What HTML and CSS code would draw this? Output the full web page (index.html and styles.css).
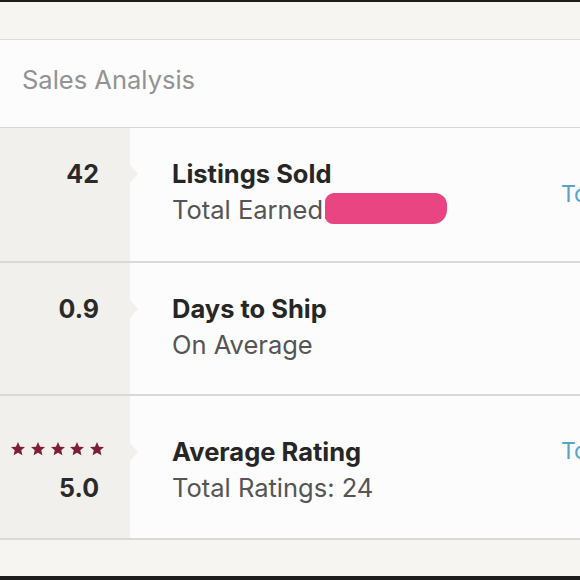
FILE: index.html
```html
<!DOCTYPE html>
<html>
<head>
<meta charset="utf-8">
<link rel="stylesheet" href="styles.css">
</head>
<body>
<div class="frame">
  <div class="topbar"></div>
  <div class="spacer"></div>
  <section class="panel">
    <header class="panel-head">Sales Analysis</header>
    <div class="row">
      <div class="stat"><span class="num">42</span></div>
      <div class="info">
        <div class="text">
          <div class="title">Listings Sold</div>
          <div class="sub">Total Earned:<span class="redact"></span></div>
        </div>
        <a class="link">To</a>
      </div>
    </div>
    <div class="row row-ship">
      <div class="stat"><span class="num">0.9</span></div>
      <div class="info">
        <div class="text">
          <div class="title">Days to Ship</div>
          <div class="sub">On Average</div>
        </div>
      </div>
    </div>
    <div class="row row-rating">
      <div class="stat">
        <span class="stars">
          <svg viewBox="0 0 24 24"><path d="M12 1.5l3.1 7 7.4.6-5.6 4.9 1.7 7.4L12 17.5l-6.6 3.9 1.7-7.4L1.5 9.1l7.4-.6z"/></svg>
          <svg viewBox="0 0 24 24"><path d="M12 1.5l3.1 7 7.4.6-5.6 4.9 1.7 7.4L12 17.5l-6.6 3.9 1.7-7.4L1.5 9.1l7.4-.6z"/></svg>
          <svg viewBox="0 0 24 24"><path d="M12 1.5l3.1 7 7.4.6-5.6 4.9 1.7 7.4L12 17.5l-6.6 3.9 1.7-7.4L1.5 9.1l7.4-.6z"/></svg>
          <svg viewBox="0 0 24 24"><path d="M12 1.5l3.1 7 7.4.6-5.6 4.9 1.7 7.4L12 17.5l-6.6 3.9 1.7-7.4L1.5 9.1l7.4-.6z"/></svg>
          <svg viewBox="0 0 24 24"><path d="M12 1.5l3.1 7 7.4.6-5.6 4.9 1.7 7.4L12 17.5l-6.6 3.9 1.7-7.4L1.5 9.1l7.4-.6z"/></svg>
        </span>
        <span class="num">5.0</span>
      </div>
      <div class="info">
        <div class="text">
          <div class="title">Average Rating</div>
          <div class="sub">Total Ratings: 24</div>
        </div>
        <a class="link link-top">To</a>
      </div>
    </div>
  </section>
  <div class="bottom"></div>
</div>
</body>
</html>
```
FILE: styles.css
```css
html, body {
  margin: 0;
  padding: 0;
  overflow: hidden;
}
body {
  background: #f6f5f2;
  font-family: "Inter", "Open Sans", sans-serif;
  width: 580px;
  height: 580px;
}
.frame {
  display: flex;
  flex-direction: column;
  height: 580px;
}
.topbar {
  height: 2px;
  background: #1d1d1d;
}
.spacer {
  height: 37px;
  background: #f6f5f2;
  border-bottom: 1px solid #dedad6;
}
.panel {
  background: #fcfcfc;
}
.panel-head {
  height: 88px;
  display: flex;
  align-items: center;
  padding-left: 22px;
  padding-bottom: 8px;
  box-sizing: border-box;
  font-size: 25.5px;
  color: #939393;
  border-bottom: 1px solid #d6d6d6;
}
.row {
  display: grid;
  grid-template-columns: 130px 1fr;
  border-bottom: 2px solid #d9d9d9;
}
.stat {
  background: #f2f0ec;
  position: relative;
  display: flex;
  flex-direction: column;
  align-items: flex-end;
  padding: 28px 31px 33px 0;
}
.stat::after {
  content: "";
  position: absolute;
  right: -8px;
  top: 37px;
  border-top: 9px solid transparent;
  border-bottom: 9px solid transparent;
  border-left: 8px solid #f2f0ec;
}
.num {
  font-weight: 700;
  font-size: 25px;
  line-height: 36px;
  color: #2a2a2a;
}
.info {
  display: grid;
  grid-template-columns: 390px auto;
  align-items: center;
  padding: 28px 0 33px 42px;
}
.title {
  font-weight: 700;
  font-size: 25.5px;
  line-height: 36px;
  color: #262626;
}
.sub {
  font-size: 25.5px;
  line-height: 36px;
  color: #555555;
  white-space: nowrap;
}
.redact {
  display: inline-block;
  vertical-align: middle;
  width: 122px;
  height: 31px;
  margin-left: -5px;
  margin-top: -7px;
  background: #e94582;
  border-radius: 9px 12px 14px 8px;
}
.link {
  font-size: 23px;
  color: #5aa3c8;
  white-space: nowrap;
  margin-top: 4px;
  margin-left: -1px;
}
.link-top {
  align-self: start;
  margin-top: 3px;
}
.row-ship .stat,
.row-ship .info {
  padding-bottom: 31px;
}
.row-rating .stat,
.row-rating .info {
  padding-top: 38px;
  padding-bottom: 32px;
}
.row-rating .stat::after {
  top: 47px;
}
.stars {
  display: flex;
  gap: 3.75px;
  height: 36px;
  align-items: center;
  margin-right: -6px;
  margin-top: -3px;
}
.stars svg {
  width: 16px;
  height: 16px;
  fill: #7e1f35;
}
.row-rating .num {
  margin-top: 3px;
}
.bottom {
  flex: 1;
  background: #f6f5f2;
  border-bottom: 4px solid #1d1d1d;
}
```
